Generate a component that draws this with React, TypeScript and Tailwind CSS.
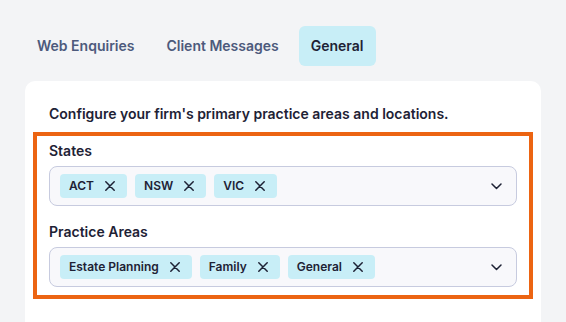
import React from "react";

const XIcon = () => (
  <svg width="10" height="10" viewBox="0 0 10 10" fill="none" stroke="#1e2235" strokeWidth="1.5" strokeLinecap="round">
    <path d="M0.8 0.8L9.2 9.2M9.2 0.8L0.8 9.2" />
  </svg>
);

const Chevron = () => (
  <svg width="11" height="7" viewBox="0 0 11 7" fill="none" stroke="#1e2235" strokeWidth="1.5" strokeLinecap="round" strokeLinejoin="round">
    <path d="M1 1L5.5 5.5L10 1" />
  </svg>
);

const Chip = ({ label }: { label: string }) => (
  <div className="flex h-6 items-center gap-[11px] rounded-[4px] bg-[#c8eef7] pl-[9px] pr-3 text-xs font-semibold text-[#1e2235]">
    <span>{label}</span>
    <XIcon />
  </div>
);

const MultiSelect = ({ items }: { items: string[] }) => (
  <div className="flex h-10 items-center justify-between rounded-lg border border-[#c7cbdf] bg-[#f8f8fb] pl-[10px] pr-[14px]">
    <div className="flex items-center gap-2">
      {items.map((i) => (
        <Chip key={i} label={i} />
      ))}
    </div>
    <Chevron />
  </div>
);

export default function App() {
  return (
    <div
      className="h-[322px] w-[566px] overflow-hidden bg-[#f3f4f6]"
      style={{ fontFamily: "Inter, 'Noto Sans', sans-serif" }}
    >
      <div className="flex gap-2 pl-[25px] pt-[26px]">
        <div className="flex h-10 items-center rounded-md px-3 text-sm font-semibold text-[#4d5a7c]">Web Enquiries</div>
        <div className="flex h-10 items-center rounded-md px-3 text-sm font-semibold text-[#4d5a7c]">Client Messages</div>
        <div className="flex h-10 items-center rounded-md bg-[#c8eef7] px-3 text-sm font-semibold text-[#1e2235]">General</div>
      </div>
      <div className="ml-[25px] mt-[15px] h-[260px] w-[516px] rounded-t-[10px] bg-white px-2 pt-[23px]">
        <p className="px-4 text-sm font-semibold leading-5 text-[#1e2235]">
          Configure your firm's primary practice areas and locations.
        </p>
        <div className="mt-2 border-4 border-[#ec6412] px-3 pb-2 pt-[5px]">
          <div className="text-sm font-semibold leading-5 text-[#1e2235]">States</div>
          <div className="mt-[5px]">
            <MultiSelect items={["ACT", "NSW", "VIC"]} />
          </div>
          <div className="mt-4 text-sm font-semibold leading-5 text-[#1e2235]">Practice Areas</div>
          <div className="mt-[5px]">
            <MultiSelect items={["Estate Planning", "Family", "General"]} />
          </div>
        </div>
      </div>
    </div>
  );
}
